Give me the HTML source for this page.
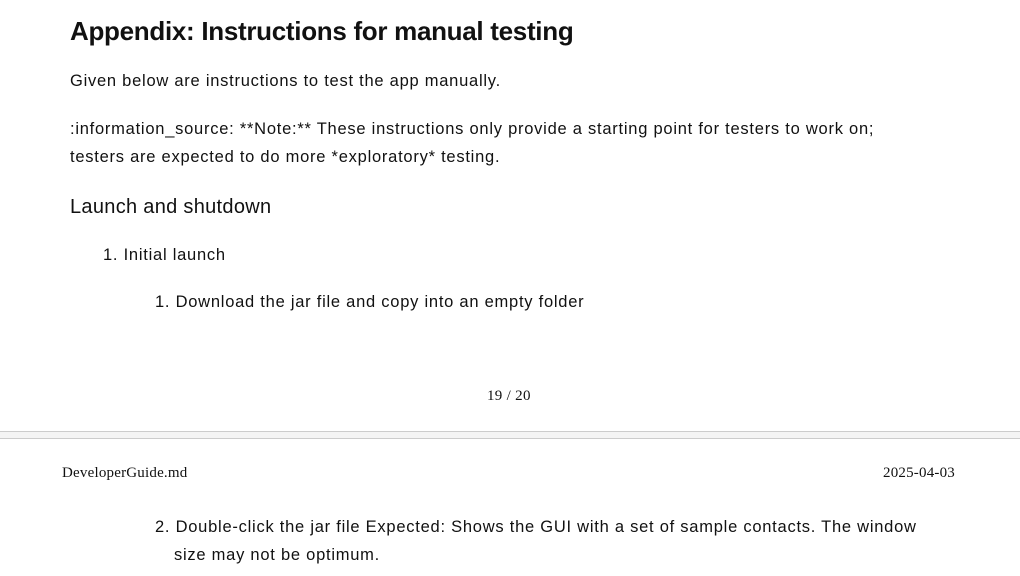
<!DOCTYPE html>
<html><head><meta charset="utf-8"><style>
body{margin:0;width:1020px;height:576px;background:#fff;position:relative;overflow:hidden;font-family:"Liberation Sans",sans-serif;color:#111}
.a{position:absolute;white-space:nowrap}
.t{font-size:16.5px;letter-spacing:0.75px}
.s{font-family:"Liberation Serif",serif;font-size:15px;color:#111}
</style></head><body>
<div class="a" style="left:70px;top:16px;font-size:26px;font-weight:bold;letter-spacing:-0.3px">Appendix: Instructions for manual testing</div>
<div class="a t" style="left:70px;top:72px">Given below are instructions to test the app manually.</div>
<div class="a t" style="left:70px;top:115px;line-height:28px">:information_source: **Note:** These instructions only provide a starting point for testers to work on;<br>testers are expected to do more *exploratory* testing.</div>
<div class="a" style="left:70px;top:196px;font-size:20px;letter-spacing:0.3px">Launch and shutdown</div>
<div class="a t" style="left:103px;top:246px">1. Initial launch</div>
<div class="a t" style="left:155px;top:293px">1. Download the jar file and copy into an empty folder</div>
<div class="a s" style="left:487px;top:388px;letter-spacing:0.3px">19 / 20</div>
<div class="a" style="left:0;top:431px;width:1020px;height:8px;background:#f4f4f4;border-top:1px solid #ccc;border-bottom:1px solid #ccc;box-sizing:border-box"></div>
<div class="a s" style="left:62px;top:465px;letter-spacing:0.2px">DeveloperGuide.md</div>
<div class="a s" style="left:883px;top:465px;letter-spacing:0.2px">2025-04-03</div>
<div class="a t" style="left:155px;top:513px;line-height:28px">2. Double-click the jar file Expected: Shows the GUI with a set of sample contacts. The window<br><span style="padding-left:19px">size may not be optimum.</span></div>
</body></html>
